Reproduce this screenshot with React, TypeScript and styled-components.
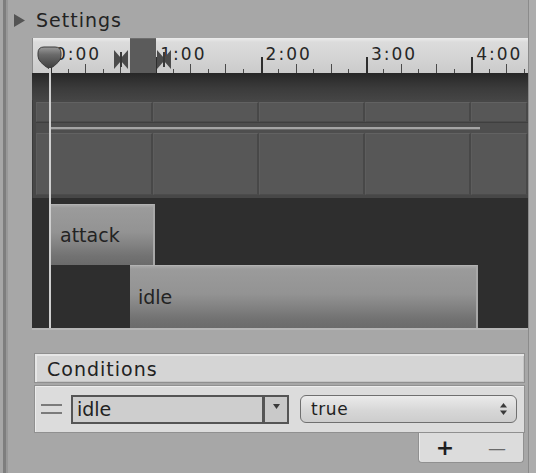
import React from "react";
import styled, { createGlobalStyle } from "styled-components";

const GlobalStyle = createGlobalStyle`
  html, body { margin: 0; padding: 0; background: #a7a7a7; }
  body { font-family: "DejaVu Sans", "Liberation Sans", sans-serif; }
  #root { width: 536px; height: 473px; overflow: hidden; }
`;

const Page = styled.div`
  width: 536px;
  height: 473px;
  display: flex;
  box-sizing: border-box;
  padding-left: 3px;
  background: #a7a7a7;
  overflow: hidden;
`;

const LeftRail = styled.div`
  width: 3px;
  background: #7e7e7e;
  border-right: 2px solid #989898;
`;

const RightRail = styled.div`
  width: 7px;
  border-left: 1px solid #8b8b8b;
  background: #adadad;
`;

const Main = styled.div`
  width: 520px;
  display: flex;
  flex-direction: column;
`;

const SettingsRow = styled.div`
  height: 38px;
  box-sizing: border-box;
  padding: 2px 0 0 6px;
  display: flex;
  align-items: center;
  gap: 11px;
`;

const SettingsLabel = styled.span`
  font-size: 19px;
  letter-spacing: 1px;
  color: #232323;
`;

const Timeline = styled.div`
  position: relative;
  margin-left: 24px;
  width: 496px;
  display: flex;
  flex-direction: column;
  box-shadow: 0 2px 0 #b6b6b6;
`;

const Ruler = styled.div`
  height: 35px;
  display: flex;
  box-sizing: border-box;
  padding-left: 17px;
  overflow: hidden;
  background: linear-gradient(#ececec 0, #dcdcdc 4px, #d3d3d3 60%, #cbcbcb 100%);
  border-left: 1px solid #8a8a8a;
`;

const Segment = styled.div`
  flex: 0 0 105.3px;
  box-sizing: border-box;
  padding: 8px 0 0 5px;
  font-size: 17px;
  line-height: 17px;
  letter-spacing: 2px;
  color: #262626;
  background-repeat: no-repeat;
  background-image: linear-gradient(#2e2e2e, #2e2e2e), linear-gradient(#4a4a4a, #4a4a4a),
    linear-gradient(#4a4a4a, #4a4a4a), linear-gradient(#4a4a4a, #4a4a4a),
    linear-gradient(#4a4a4a, #4a4a4a), linear-gradient(#4a4a4a, #4a4a4a);
  background-size: 2px 16px, 1px 4px, 1px 9px, 1px 4px, 1px 9px, 1px 4px;
  background-position: 0 100%, 17.5px 100%, 35.1px 100%, 52.6px 100%, 70.2px 100%, 87.7px 100%;
`;

const TopBand = styled.div`
  height: 27px;
  background: linear-gradient(#262626 0, #2f2f2f 6px, #3c3c3c 60%, #454545 100%);
`;

const SourceBand = styled.div`
  height: 98px;
  box-sizing: border-box;
  padding: 2px 0 3px 3px;
  display: flex;
  flex-direction: column;
  background: #474747;
  border-left: 1px solid #3a3a3a;
`;

const CellRow = styled.div<{ $h: number }>`
  height: ${(p) => p.$h}px;
  display: flex;
`;

const Cell = styled.div<{ $w?: number }>`
  flex: ${(p) => (p.$w ? `0 0 ${p.$w}px` : "1 1 auto")};
  box-sizing: border-box;
  background: #575757;
  border-top: 1px solid #626262;
  border-left: 1px solid #5d5d5d;
  border-right: 2px solid #484848;
  border-bottom: 1px solid #4c4c4c;
`;

const CurveRow = styled.div`
  height: 10px;
  display: flex;
  align-items: center;
  background: #4e4e4e;
  border-top: 1px solid #3f3f3f;
`;

const CurveLine = styled.div`
  margin-left: 14px;
  width: 430px;
  height: 2px;
  background: #a4a4a4;
  box-shadow: 0 1px 0 #6a6a6a;
`;

const StateLane = styled.div`
  height: 130px;
  box-sizing: border-box;
  padding-top: 6px;
  display: flex;
  flex-direction: column;
  background: #2e2e2e;
`;

const StateBlock = styled.div<{ $left: number; $width: number; $h: number }>`
  margin-left: ${(p) => p.$left}px;
  width: ${(p) => p.$width}px;
  height: ${(p) => p.$h}px;
  box-sizing: border-box;
  display: flex;
  align-items: center;
  padding-left: ${(p) => (p.$left > 50 ? 8 : 10)}px;
  font-size: 19px;
  color: #232323;
  background: linear-gradient(#a9a9a9 0, #9b9b9b 3px, #939393 45%, #838383 65%, #727272 85%, #6b6b6b 100%);
  border-top: 1px solid #b2b2b2;
  border-right: 2px solid #a8a8a8;
`;

const Playhead = styled.div`
  position: absolute;
  left: 5px;
  top: 8px;
  width: 25px;
  height: 282px;
  display: flex;
  flex-direction: column;
  align-items: center;
  pointer-events: none;
`;

const PlayheadLine = styled.div`
  width: 2px;
  flex: 1;
  margin-top: -2px;
  background: #cfcfcf;
`;

const TransitionMarker = styled.div`
  position: absolute;
  left: 82px;
  top: 0;
  height: 34px;
  display: flex;
  align-items: flex-start;
`;

const MarkerBlock = styled.div`
  width: 26px;
  height: 34px;
  margin: 0 1px 0 2px;
  background: #5b5b5b;
  border-top: 1px solid #6e6e6e;
`;

const Bowtie = styled.svg`
  margin-top: 12px;
`;

const Conditions = styled.div`
  margin: 25px 0 0 26px;
  width: 491px;
  display: flex;
  flex-direction: column;
`;

const ConditionsHeader = styled.div`
  height: 30px;
  box-sizing: border-box;
  display: flex;
  align-items: center;
  padding: 1px 0 0 12px;
  font-size: 19px;
  letter-spacing: 1px;
  color: #222;
  background: #d5d5d5;
  border: 1px solid #8f8f8f;
  box-shadow: inset 2px 2px 0 #e6e6e6, inset -1px -1px 0 #c4c4c4;
`;

const ConditionsBody = styled.div`
  margin-top: 2px;
  height: 48px;
  box-sizing: border-box;
  display: flex;
  align-items: center;
  padding-left: 6px;
  background: #dcdcdc;
  border: 1px solid #909090;
  box-shadow: inset 1px 1px 0 #ececec;
`;

const DragHandle = styled.div`
  width: 21px;
  height: 6px;
  margin-right: 9px;
  border-top: 2px solid #7b7b7b;
  border-bottom: 2px solid #7b7b7b;
`;

const ParamField = styled.div`
  width: 194px;
  height: 29px;
  box-sizing: border-box;
  display: flex;
  align-items: center;
  padding-left: 4px;
  font-size: 19px;
  color: #222;
  background: #cecece;
  border: 2px solid #555;
  border-right-width: 3px;
`;

const ParamArrow = styled.div`
  width: 24px;
  height: 29px;
  box-sizing: border-box;
  display: flex;
  justify-content: center;
  padding-top: 7px;
  background: #c9c9c9;
  border: 2px solid #555;
  border-left: none;
`;

const ValuePopup = styled.div`
  margin-left: 11px;
  width: 217px;
  height: 28px;
  box-sizing: border-box;
  display: flex;
  align-items: center;
  justify-content: space-between;
  padding: 0 9px 0 10px;
  font-size: 17px;
  letter-spacing: 0.6px;
  color: #1f1f1f;
  background: linear-gradient(#ebebeb, #d7d7d7 55%, #cdcdcd);
  border: 1px solid #6f6f6f;
  border-radius: 6px;
`;

const Footer = styled.div`
  align-self: flex-end;
  margin-right: 1px;
  width: 106px;
  height: 30px;
  box-sizing: border-box;
  display: flex;
  align-items: center;
  background: #dcdcdc;
  border: 1px solid #909090;
  border-top: none;
  border-radius: 0 0 4px 4px;
  box-shadow: inset 1px 0 0 #ececec;
`;

const FooterButton = styled.div<{ $light?: boolean }>`
  flex: 1;
  text-align: center;
  font-size: ${(p) => (p.$light ? 18 : 22)}px;
  font-weight: ${(p) => (p.$light ? 400 : 700)};
  line-height: 22px;
  color: ${(p) => (p.$light ? "#6a6a6a" : "#1e1e1e")};
`;

const BowtieIcon = () => (
  <Bowtie width="14" height="19" viewBox="0 0 14 19">
    <polygon points="0,0 7,8 7,11 0,19" fill="#4b4b4b" />
    <polygon points="14,0 7,8 7,11 14,19" fill="#4b4b4b" />
    <rect x="6" y="2" width="2" height="15" fill="#3a3a3a" />
  </Bowtie>
);

const labels = ["0:00", "1:00", "2:00", "3:00", "4:00"];

export default function App() {
  return (
    <Page>
      <GlobalStyle />
      <LeftRail />
      <Main>
        <SettingsRow>
          <svg width="11" height="13" viewBox="0 0 11 13">
            <polygon points="0,0 11,6.5 0,13" fill="#545454" />
          </svg>
          <SettingsLabel>Settings</SettingsLabel>
        </SettingsRow>
        <Timeline>
          <Ruler>
            {labels.map((l) => (
              <Segment key={l}>{l}</Segment>
            ))}
          </Ruler>
          <TopBand />
          <SourceBand>
            <CellRow $h={20}>
              <Cell $w={117} />
              <Cell $w={106} />
              <Cell $w={106} />
              <Cell $w={106} />
              <Cell />
            </CellRow>
            <CurveRow>
              <CurveLine />
            </CurveRow>
            <CellRow $h={63}>
              <Cell $w={117} />
              <Cell $w={106} />
              <Cell $w={106} />
              <Cell $w={106} />
              <Cell />
            </CellRow>
          </SourceBand>
          <StateLane>
            <StateBlock $left={18} $width={105} $h={61}>attack</StateBlock>
            <StateBlock $left={98} $width={348} $h={63}>idle</StateBlock>
          </StateLane>
          <TransitionMarker>
            <BowtieIcon />
            <MarkerBlock />
            <BowtieIcon />
          </TransitionMarker>
          <Playhead>
            <svg width="25" height="24" viewBox="0 0 25 24">
              <defs>
                <linearGradient id="ph" x1="0" y1="0" x2="0" y2="1">
                  <stop offset="0" stopColor="#9a9a9a" />
                  <stop offset="0.35" stopColor="#6a6a6a" />
                  <stop offset="1" stopColor="#3c3c3c" />
                </linearGradient>
              </defs>
              <path
                d="M1,7 Q1,1 7,1 L18,1 Q24,1 24,7 L24,10 Q24,16 12.5,23 Q1,16 1,10 Z"
                fill="url(#ph)"
                stroke="#3a3a3a"
                strokeWidth="1"
              />
            </svg>
            <PlayheadLine />
          </Playhead>
        </Timeline>
        <Conditions>
          <ConditionsHeader>Conditions</ConditionsHeader>
          <ConditionsBody>
            <DragHandle />
            <ParamField>idle</ParamField>
            <ParamArrow>
              <svg width="7" height="5" viewBox="0 0 7 5">
                <polygon points="0,0 7,0 3.5,5" fill="#3a3a3a" />
              </svg>
            </ParamArrow>
            <ValuePopup>
              <span>true</span>
              <svg width="7" height="12" viewBox="0 0 7 12">
                <polygon points="3.5,0 7,4.5 0,4.5" fill="#3a3a3a" />
                <polygon points="0,7.5 7,7.5 3.5,12" fill="#3a3a3a" />
              </svg>
            </ValuePopup>
          </ConditionsBody>
          <Footer>
            <FooterButton>+</FooterButton>
            <FooterButton $light>—</FooterButton>
          </Footer>
        </Conditions>
      </Main>
      <RightRail />
    </Page>
  );
}
